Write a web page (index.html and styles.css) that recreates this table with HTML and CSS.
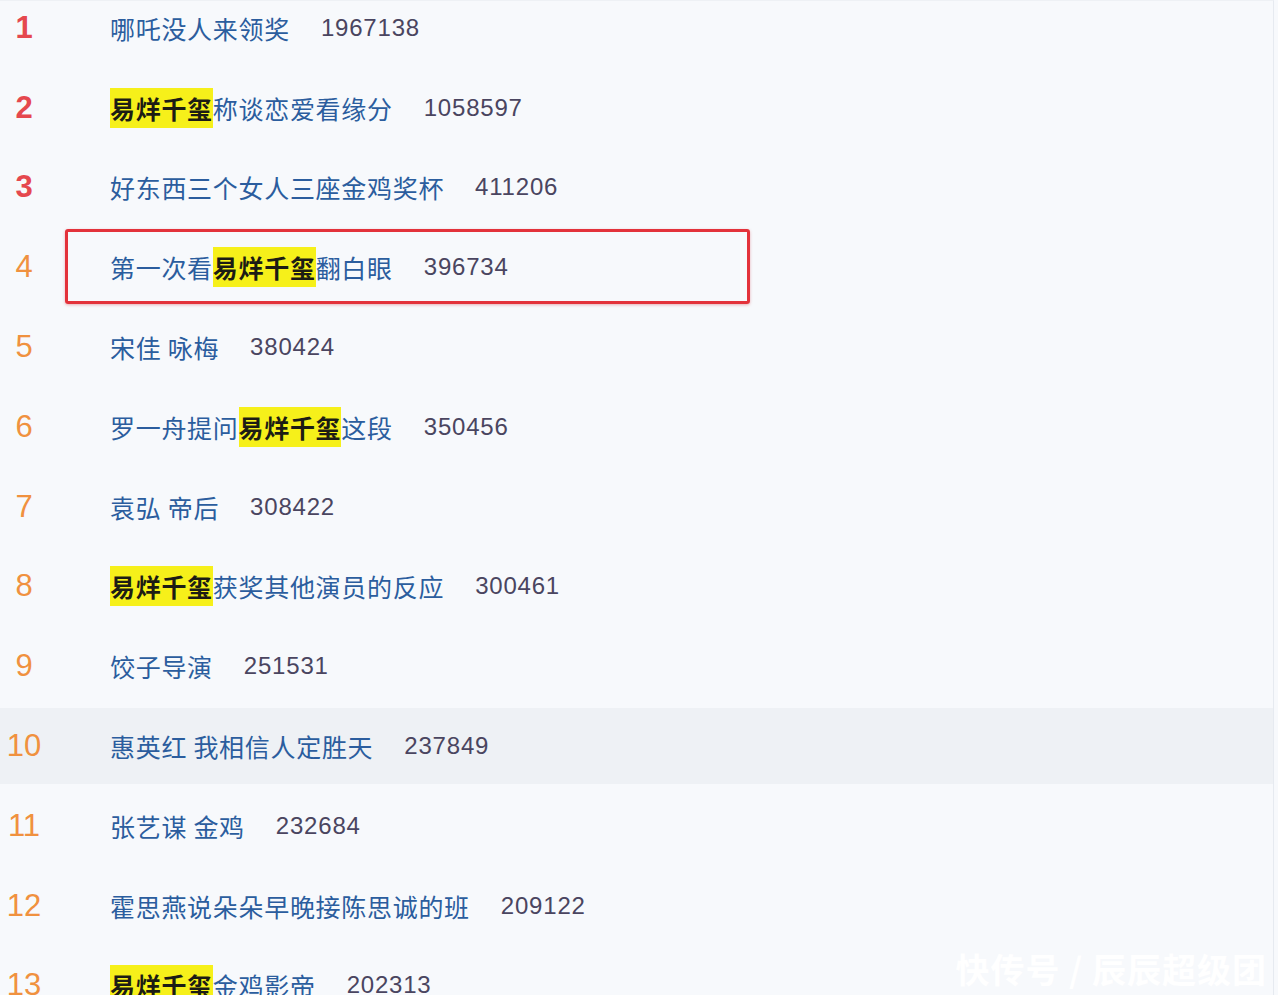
FILE: index.html
```html
<!DOCTYPE html>
<html lang="zh-CN">
<head>
    <meta charset="UTF-8">
    <meta name="viewport" content="width=device-width, initial-scale=1.0">
    <title>热搜榜</title>
    <link rel="stylesheet" href="styles.css">
</head>
<body>

    <div class="board">
        <ul class="hot-list">
            <li class="row top">
                <span class="rank">1</span>
                <span class="title">哪吒没人来领奖</span>
                <span class="count">1967138</span>
            </li>
            <li class="row top">
                <span class="rank">2</span>
                <span class="title"><mark>易烊千玺</mark>称谈恋爱看缘分</span>
                <span class="count">1058597</span>
            </li>
            <li class="row top">
                <span class="rank">3</span>
                <span class="title">好东西三个女人三座金鸡奖杯</span>
                <span class="count">411206</span>
            </li>
            <li class="row boxed">
                <span class="rank">4</span>
                <span class="title">第一次看<mark>易烊千玺</mark>翻白眼</span>
                <span class="count">396734</span>
                <!-- red frame drawn over the row -->
                <span class="frame"></span>
            </li>
            <li class="row">
                <span class="rank">5</span>
                <span class="title">宋佳 咏梅</span>
                <span class="count">380424</span>
            </li>
            <li class="row">
                <span class="rank">6</span>
                <span class="title">罗一舟提问<mark>易烊千玺</mark>这段</span>
                <span class="count">350456</span>
            </li>
            <li class="row">
                <span class="rank">7</span>
                <span class="title">袁弘 帝后</span>
                <span class="count">308422</span>
            </li>
            <li class="row">
                <span class="rank">8</span>
                <span class="title"><mark>易烊千玺</mark>获奖其他演员的反应</span>
                <span class="count">300461</span>
            </li>
            <li class="row">
                <span class="rank">9</span>
                <span class="title">饺子导演</span>
                <span class="count">251531</span>
            </li>
            <li class="row hover">
                <span class="rank">10</span>
                <span class="title">惠英红 我相信人定胜天</span>
                <span class="count">237849</span>
            </li>
            <li class="row">
                <span class="rank">11</span>
                <span class="title">张艺谋 金鸡</span>
                <span class="count">232684</span>
            </li>
            <li class="row">
                <span class="rank">12</span>
                <span class="title">霍思燕说朵朵早晚接陈思诚的班</span>
                <span class="count">209122</span>
            </li>
            <li class="row">
                <span class="rank">13</span>
                <span class="title"><mark>易烊千玺</mark>金鸡影帝</span>
                <span class="count">202313</span>
            </li>
        </ul>

        <div class="watermark">快传号 / 辰辰超级团</div>
    </div>

</body>
</html>
```

FILE: styles.css
```css
html, body {
    margin: 0;
    height: 100%;
    overflow: hidden;
}

body {
    background-color: #f7f9fc;
    font-family: "Noto Sans CJK SC", "Noto Sans", sans-serif;
}

.board {
    position: relative;
    width: 1274px;
    height: 995px;
    border-top: 1px solid #eef1f5;
    border-right: 1px solid #e6eaf0;
    box-sizing: border-box;
    overflow: hidden;
}

/* List of hot topics */
.hot-list {
    list-style: none;
    margin: -13px 0 0 0;
    padding: 0;
}

.row {
    position: relative;
    display: flex;
    align-items: center;
    height: 79.8px;
}

.row.hover {
    background: linear-gradient(#f7f9fc 0 2px, #eef1f5 2px calc(100% - 2px), #f7f9fc calc(100% - 2px));
}

.rank {
    width: 48px;
    text-align: center;
    font-family: "Liberation Sans", Arial, sans-serif;
    font-size: 31px;
    color: #f0913f;
    margin-right: 62px;
}

.row.top .rank {
    color: #e5484e;
    font-weight: bold;
}

.title {
    font-size: 25px;
    letter-spacing: 0.7px;
    color: #2b5d9e;
    white-space: nowrap;
}

.title mark {
    background-color: #f6f01a;
    color: #1c1c14;
    font-weight: bold;
    padding: 2px 0;
}

.count {
    margin-left: 31px;
    font-family: "Liberation Sans", Arial, sans-serif;
    font-size: 24px;
    letter-spacing: 0.8px;
    color: #4a4560;
}

/* Red frame around row 4 */
.frame {
    position: absolute;
    left: 65px;
    top: 2px;
    width: 685px;
    height: 75px;
    box-sizing: border-box;
    border: 3px solid #e3323b;
    border-radius: 3px;
    box-shadow: 0 1px 3px rgba(200, 40, 50, 0.35);
}

.watermark {
    position: absolute;
    right: 6px;
    bottom: 2px;
    font-size: 34px;
    font-weight: bold;
    color: #ffffff;
    letter-spacing: 1px;
    white-space: nowrap;
}
```
